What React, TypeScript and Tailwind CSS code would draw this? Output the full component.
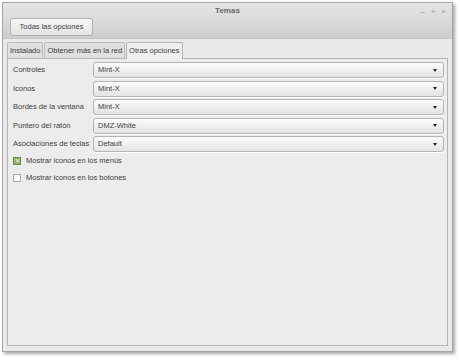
import React from "react";

const ROWS = [
  { label: "Controles", value: "Mint-X" },
  { label: "Iconos", value: "Mint-X" },
  { label: "Bordes de la ventana", value: "Mint-X" },
  { label: "Puntero del ratón", value: "DMZ-White" },
  { label: "Asociaciones de teclas", value: "Default" },
];

const TABS = ["Instalado", "Obtener más en la red", "Otras opciones"];

function Combo({ value }: { value: string }) {
  return (
    <div className="flex h-[16px] flex-1 items-center justify-between rounded-[3px] border border-[#b4b4b4] bg-gradient-to-b from-[#fbfbfb] to-[#e4e4e4] pl-[4px] pr-[6px] shadow-[0_1px_0_#ffffff]">
      <span>{value}</span>
      <span className="h-0 w-0 border-x-[2.5px] border-t-[3px] border-x-transparent border-t-[#222]" />
    </div>
  );
}

function Check({ checked, label }: { checked: boolean; label: string }) {
  return (
    <div className="flex h-[17px] items-center gap-[5px]">
      {checked ? (
        <span className="flex h-[8px] w-[8px] items-center justify-center border border-[#6f8f4f] bg-[#8fb060] text-[6px] leading-none text-white">
          ✕
        </span>
      ) : (
        <span className="h-[8px] w-[8px] border border-[#a8a8a8] bg-[#fafafa]" />
      )}
      <span>{label}</span>
    </div>
  );
}

export default function App() {
  return (
    <div
      className="h-[360px] w-[460px] bg-white pl-[2px] pt-[2px] text-[7.5px] text-[#3c3c3c]"
      style={{ fontFamily: '"Liberation Sans", Arial, sans-serif' }}
    >
      <div className="flex h-[350px] w-[451px] flex-col border border-[#a6a6a6] bg-[#e9e9e9] shadow-[2px_2px_3px_rgba(0,0,0,0.35)]">
        {/* header */}
        <div className="flex h-[36px] flex-col bg-gradient-to-b from-[#e4e4e4] via-[#dadada] to-[#cdcdcd] border-b border-[#c4c4c4]">
          <div className="relative flex h-[14px] items-center justify-center pt-[2px]">
            <span className="text-[8px] font-bold text-[#6a6a6a]">Temas</span>
            <div className="absolute right-[6px] top-[3px] flex gap-[6px] text-[8px] text-[#9a9a9a]">
              <span>–</span>
              <span>+</span>
              <span>×</span>
            </div>
          </div>
          <div className="pl-[7px] pt-[1px]">
            <div className="flex h-[18px] w-[83px] items-center justify-center rounded-[3px] border border-[#b0b0b0] bg-gradient-to-b from-[#f8f8f8] to-[#e2e2e2] text-[#444]">
              Todas las opciones
            </div>
          </div>
        </div>

        {/* notebook */}
        <div className="flex flex-1 flex-col px-[4px] pb-[5px] pt-[3px]">
          <div className="flex items-end gap-[1px]">
            {TABS.map((t, i) =>
              i === 2 ? (
                <div
                  key={t}
                  className="relative -mb-px flex h-[17px] items-center rounded-t-[2px] border border-b-0 border-[#b4b4b4] bg-[#efefef] px-[2px]"
                >
                  {t}
                </div>
              ) : (
                <div
                  key={t}
                  className="flex h-[16px] items-center rounded-t-[2px] border border-b-0 border-[#bcbcbc] bg-[#e0e0e0] px-[2px]"
                >
                  {t}
                </div>
              ),
            )}
          </div>
          <div className="flex flex-1 flex-col border border-[#b4b4b4] bg-[#ececec] pl-[5px] pr-[3px] pt-[3px]">
            <div className="flex flex-col gap-[2.5px]">
              {ROWS.map((r) => (
                <div key={r.label} className="flex h-[16px] items-center">
                  <span className="w-[80px] shrink-0">{r.label}</span>
                  <Combo value={r.value} />
                </div>
              ))}
            </div>
            <div className="mt-0">
              <Check checked label="Mostrar iconos en los menús" />
              <Check checked={false} label="Mostrar iconos en los botones" />
            </div>
          </div>
        </div>
      </div>
    </div>
  );
}
